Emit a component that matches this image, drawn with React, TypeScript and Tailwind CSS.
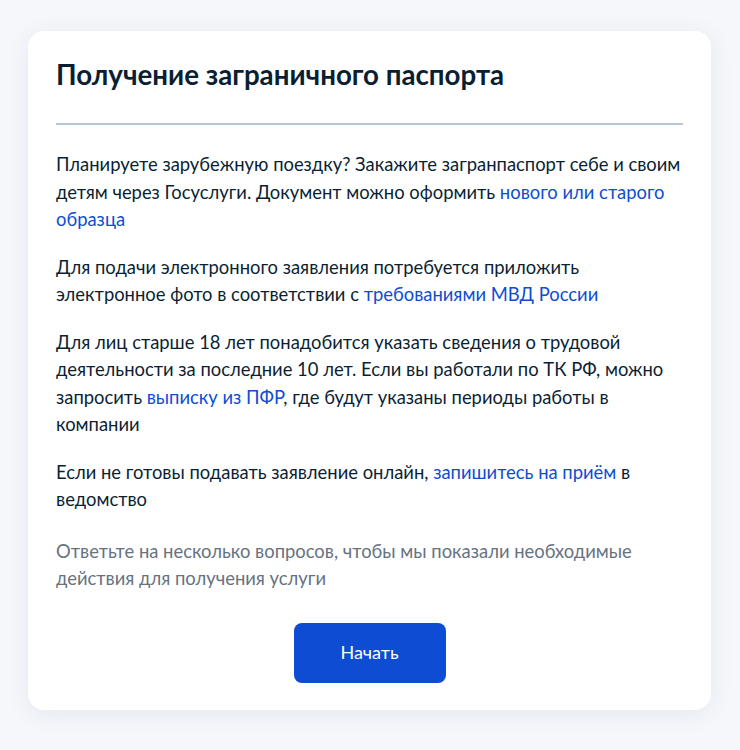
import React from "react";

export default function App() {
  const link = "text-[#0d4cd3]";
  return (
    <div className="min-h-[750px] w-full bg-[#f5f7fb] pt-[31px] px-[28px] pb-[40px]" style={{ fontFamily: "Lato, 'Noto Sans', sans-serif" }}>
      <div className="w-[683px] rounded-[16px] bg-white shadow-[0_4px_24px_rgba(30,50,90,0.08)] px-[28px] pt-[27px] pb-[27px] text-[#0b1f33]">
        <h1 className="text-[27.7px] leading-[34px] font-bold">Получение заграничного паспорта</h1>
        <div className="mt-[31px] h-[2px] bg-[#b8c4d8]" />
        <div className="mt-[26px] -mr-[4px] text-[18.4px] leading-[27.5px]">
          <p>
            Планируете зарубежную поездку? Закажите загранпаспорт себе и своим детям через Госуслуги. Документ можно оформить{" "}
            <span className={link}>нового или старого образца</span>
          </p>
          <p className="mt-[20px]">
            Для подачи электронного заявления потребуется приложить электронное фото в соответствии с{" "}
            <span className={link}>требованиями МВД России</span>
          </p>
          <p className="mt-[20px]">
            Для лиц старше 18 лет понадобится указать сведения о трудовой деятельности за последние 10 лет. Если вы работали по ТК РФ, можно запросить{" "}
            <span className={link}>выписку из ПФР</span>, где будут указаны периоды работы в компании
          </p>
          <p className="mt-[20px]">
            Если не готовы подавать заявление онлайн, <span className={link}>запишитесь на приём</span> в ведомство
          </p>
          <p className="mt-[24px] text-[#66727f]">
            Ответьте на несколько вопросов, чтобы мы показали необходимые действия для получения услуги
          </p>
        </div>
        <div className="mt-[30px] flex justify-center">
          <button className="w-[152px] h-[60px] rounded-[8px] bg-[#0d4cd3] text-white text-[18px]">Начать</button>
        </div>
      </div>
    </div>
  );
}
